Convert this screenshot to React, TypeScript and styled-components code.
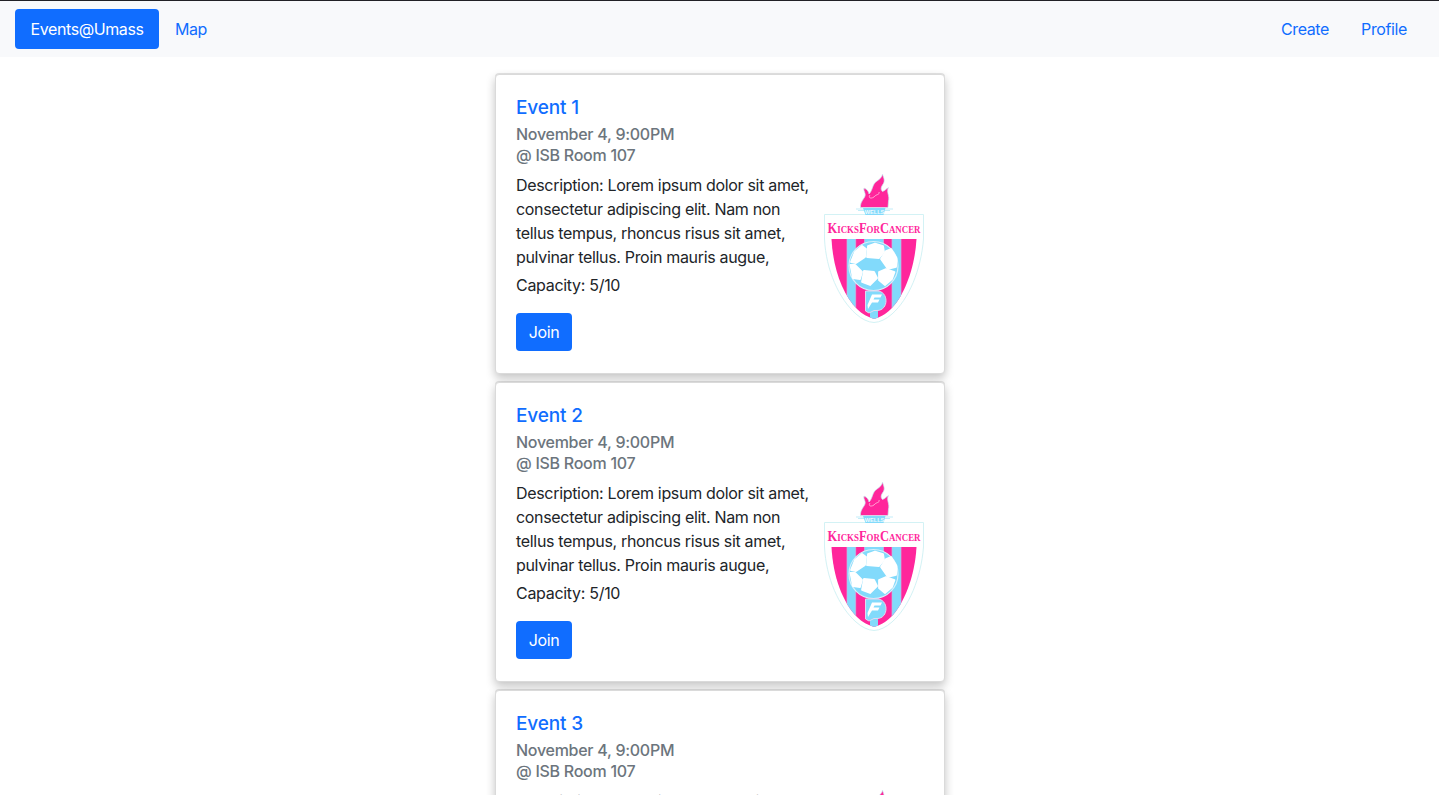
import React from "react";
import styled, { createGlobalStyle } from "styled-components";

const GlobalStyle = createGlobalStyle`
  *, *::before, *::after { box-sizing: border-box; }
  body {
    margin: 0;
    overflow: hidden;
    background: #fff;
    color: #212529;
    font-family: Inter, "Liberation Sans", sans-serif;
    font-size: 16px;
    line-height: 24px;
  }
`;

const Page = styled.div`
  height: 100vh;
  overflow: hidden;
  border-top: 1px solid #212126;
`;

const Navbar = styled.nav`
  display: flex;
  align-items: center;
  height: 56px;
  padding: 0 16px 0 15px;
  background: #f8f9fb;
`;

const NavLink = styled.a<{ $active?: boolean; $width: number }>`
  width: ${(p) => p.$width}px;
  height: 40px;
  border-radius: 4px;
  line-height: 41px;
  text-align: center;
  white-space: nowrap;
  letter-spacing: -0.4px;
  color: ${(p) => (p.$active ? "#fff" : "#106dff")};
  background: ${(p) => (p.$active ? "#106dff" : "transparent")};
`;

const Spacer = styled.div`
  flex: 1;
`;

const Feed = styled.main`
  display: flex;
  flex-direction: column;
  align-items: center;
  gap: 8px;
  padding-top: 17px;
`;

const Card = styled.article`
  flex: none;
  width: 450px;
  height: 300px;
  padding: 20px 20px 20px 20.5px;
  border: 1px solid #dadada;
  border-radius: 4px;
  background: #fff;
  box-shadow: 0 -1px 0 0 rgba(0, 0, 0, 0.1), 0 4px 10px 0 rgba(0, 0, 0, 0.24);
`;

const Title = styled.h5`
  margin: 0 0 4px;
  font-size: 19px;
  font-weight: 500;
  line-height: 25px;
  letter-spacing: -0.15px;
  color: #106dff;
`;

const Subtitle = styled.h6`
  margin: 0 0 7px;
  font-size: 16px;
  font-weight: 500;
  line-height: 21px;
  letter-spacing: -0.27px;
  color: #6c757d;
`;

const Body = styled.div`
  display: flex;
  justify-content: space-between;
`;

const Details = styled.div`
  flex: none;
  width: 300px;
`;

const Line = styled.span`
  display: block;
  white-space: nowrap;
  letter-spacing: -0.32px;
`;

const Capacity = styled.div`
  margin: 4px 0 16px;
  letter-spacing: -0.3px;
`;

const JoinButton = styled.button`
  display: block;
  width: 56px;
  height: 38px;
  padding: 0;
  border: 0;
  border-radius: 4px;
  background: #106dff;
  color: #fff;
  font: inherit;
  letter-spacing: -0.35px;
`;

const LogoSvg = styled.svg`
  flex: none;
  display: block;
  width: 100px;
  height: 150px;
  overflow: visible;
`;

const ClubName = styled.text`
  font-family: "Liberation Serif", serif;
  font-size: 15.5px;
  font-weight: 700;
  font-variant: small-caps;
`;

const description = [
  "Description: Lorem ipsum dolor sit amet,",
  "consectetur adipiscing elit. Nam non",
  "tellus tempus, rhoncus risus sit amet,",
  "pulvinar tellus. Proin mauris augue,",
];

const PINK = "#ff269b";
const BLUE = "#82dafb";

function ClubLogo({ id }: { id: number }) {
  const clip = `shield-${id}`;
  return (
    <LogoSvg viewBox="0 0 100 150">
      <defs>
        <clipPath id={clip}>
          <path d="M7.5 66H92.5C91 95 80 123 67 136C61 142 56 144 50 146C44 144 38 141 33 136C19 122 9 96 7.5 66Z" />
        </clipPath>
      </defs>
      <path
        d="M.5 41.5H99.5V66C97 97 85 126 68 141Q59 149 50 149.5Q41 149 32 141C15 126 2 97 .5 66Z"
        fill="#fff"
        stroke="#d3f2f5"
      />
      <path d="M32 36H69M34 37.5H66" stroke="#b4e8f7" strokeWidth=".8" />
      <path d="M39 35H61.5L59.5 42H41.5Z" fill={BLUE} />
      <text x="50.5" y="40.8" textAnchor="middle" fontFamily="Liberation Sans, sans-serif" fontSize="5.6" fontWeight="700" fill="#effbff">
        WELLS
      </text>
      <path
        d="M58.5 1C60 6 61.5 8 58.5 12C56.5 15 57 17 58.5 18.5C61 17.5 62 16 64.5 14.5C62 19 66 23 64.5 28L64 34.5H36.5C36 29 40 26 41 23C42 20 39 18 40 15C43 16 45 19 45 21C49 17 48 11 53 8C56 6 58 4 58.5 1Z"
        fill={PINK}
        stroke="#ccebf4"
        strokeWidth=".7"
      />
      <path d="M46 22C44 25 47 26 50 24C52 21 56 22 55 19" fill="none" stroke="#ffc3e1" strokeWidth=".8" />
      <ClubName x="3.5" y="60" fill={PINK} textLength="93" lengthAdjust="spacingAndGlyphs">
        KicksForCancer
      </ClubName>
      <g clipPath={`url(#${clip})`}>
        <rect x="7" y="66" width="86" height="82" fill={PINK} />
        <path d="M23 66H31.7V148H23ZM40.5 66H59.5V112H40.5ZM46 132H54V148H46ZM68 66H77V148H68Z" fill={BLUE} />
        <path d="M23 66V148M31.7 66V148M40.5 66V76M59.5 66V76M68 66V148M77 66V148" stroke="#c6b6e2" strokeWidth=".7" />
      </g>
      <circle cx="49.5" cy="93" r="24.5" fill={BLUE} stroke="#d9f1fb" strokeWidth="1.2" />
      <g fill="#fff" stroke="#fff" strokeWidth="1.8" strokeLinejoin="round">
        <path d="M31 79L38 73L42 76L41 84L32 90L27 89Z" />
        <path d="M44 73L51 70.5L59 73L60 79L55 85L43 84Z" />
        <path d="M62 78L67 76L72.5 85L72 94L64 96L57 86Z" />
        <path d="M26.5 92L31 92L38 99L36 106L29 105Z" />
        <path d="M40 98L50 99L53 105L46 112L38 109Z" />
        <path d="M55 99L62 96L70.5 99L68 106L61 112L55 107Z" />
      </g>
      <path
        d="M41.5 118H53C65 118 65 137.5 53 137.5H50L45 140L41.5 138Z"
        fill={BLUE}
        stroke="#e2d8f1"
        strokeWidth="1"
      />
      <path d="M48 121.5H58L56.5 124.5H50.5L49.5 126.5H55.5L54 129.5H48L44 136L43.5 132Z" fill="#fff" />
    </LogoSvg>
  );
}

function EventCard({ id }: { id: number }) {
  return (
    <Card>
      <Title>Event {id}</Title>
      <Subtitle>
        November 4, 9:00PM
        <br />@ ISB Room 107
      </Subtitle>
      <Body>
        <Details>
          {description.map((line) => (
            <Line key={line}>{line}</Line>
          ))}
          <Capacity>Capacity: 5/10</Capacity>
          <JoinButton>Join</JoinButton>
        </Details>
        <ClubLogo id={id} />
      </Body>
    </Card>
  );
}

export default function App() {
  return (
    <Page>
      <GlobalStyle />
      <Navbar>
        <NavLink $active $width={144}>Events@Umass</NavLink>
        <NavLink $width={64}>Map</NavLink>
        <Spacer />
        <NavLink $width={80}>Create</NavLink>
        <NavLink $width={78}>Profile</NavLink>
      </Navbar>
      <Feed>
        {[1, 2, 3].map((id) => (
          <EventCard key={id} id={id} />
        ))}
      </Feed>
    </Page>
  );
}
